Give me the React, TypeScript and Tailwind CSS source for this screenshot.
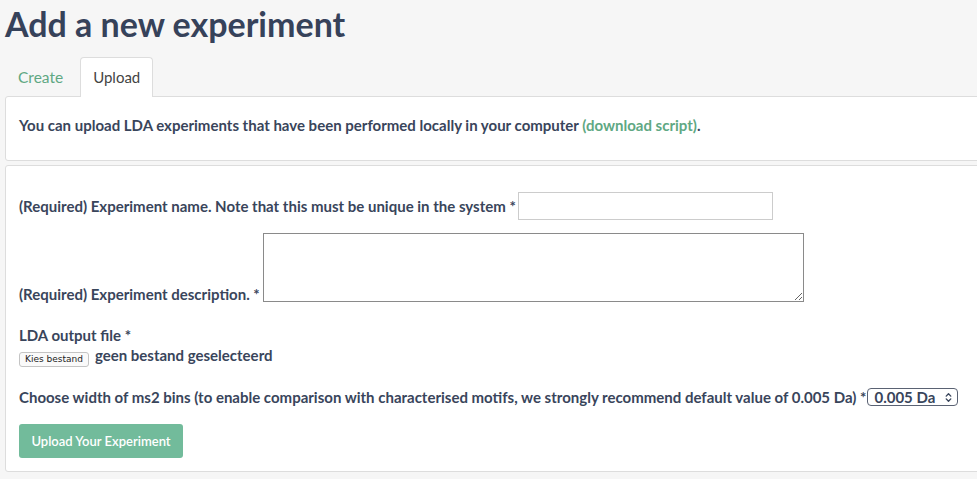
import { ChevronsUpDown } from 'lucide-react';

const textColor = 'text-[#39455b]';

const App = () => {
  return (
    <div className={`min-h-[479px] w-[977px] overflow-hidden bg-[#f6f6f6] ${textColor}`} style={{ fontFamily: 'Lato, "Noto Sans", sans-serif' }}>
      <div className="pl-[5px]">
        <h1 className="mt-[4px] text-[34px] font-bold leading-[40px] text-[#36425a]">Add a new experiment</h1>

        {/* Tabs */}
        <div className="mt-[13px] flex items-end gap-[4px] pl-0">
          <div className="px-[13px] pb-[9px] pt-[10px] text-[15.5px] leading-[20px] text-[#5fa883]">Create</div>
          <div className="relative -mb-px rounded-t-[4px] border border-b-0 border-[#dddddd] bg-white px-[12px] pb-[10px] pt-[9px] text-[15px] leading-[20px] text-[#444]">
            Upload
          </div>
        </div>

        {/* Info panel */}
        <div className="-mr-[4px] h-[65px] rounded-[3px] border border-[#dddddd] bg-white px-[13px] pt-[18px] text-[15px] font-bold leading-[20px]">
          You can upload LDA experiments that have been performed locally in your computer{' '}
          <span className="text-[#5fa883]">(download script)</span>.
        </div>

        {/* Form panel */}
        <div className="-mr-[4px] mt-[4px] rounded-[3px] border border-[#dddddd] bg-white px-[13px] pb-[13px] pt-[26px] text-[15px] font-bold leading-[20px]">
          <div className="flex items-center">
            <span>(Required) Experiment name. Note that this must be unique in the system *</span>
            <input type="text" className="ml-[2px] h-[28px] w-[255px] border border-[#cccccc] bg-white outline-none" />
          </div>

          <div className="mt-[13px] flex items-end">
            <span className="leading-none">(Required) Experiment description. *</span>
            <textarea className="ml-[3px] h-[69px] w-[541px] resize border border-[#8a8a8a] bg-white outline-none" />
          </div>

          <div className="mt-[23px]">LDA output file *</div>
          <div className="flex items-start">
            <button className="mt-[7px] h-[15px] rounded-[3px] border border-[#c4c4c4] bg-[#fafafa] px-[5px] text-[9px] font-normal leading-[13px] text-[#222]" style={{ fontFamily: '"DejaVu Sans", sans-serif' }}>
              Kies bestand
            </button>
            <span className="ml-[6px]">geen bestand geselecteerd</span>
          </div>

          <div className="mt-[20px] flex items-center">
            <span>Choose width of ms2 bins (to enable comparison with characterised motifs, we strongly recommend default value of 0.005 Da) *</span>
            <div className="ml-[1px] flex h-[18px] w-[91px] items-center justify-between rounded-[4px] border border-[#5a6273] bg-white pl-[6px] pr-[3px] text-[15px] leading-none">
              <span>0.005 Da</span>
              <ChevronsUpDown className="h-[11px] w-[11px]" strokeWidth={3} />
            </div>
          </div>

          <button className="mt-[17px] h-[34px] w-[164px] rounded-[3px] bg-[#72bb9b] text-[13px] font-semibold text-white">
            Upload Your Experiment
          </button>
        </div>
      </div>
    </div>
  );
};

export default App;
